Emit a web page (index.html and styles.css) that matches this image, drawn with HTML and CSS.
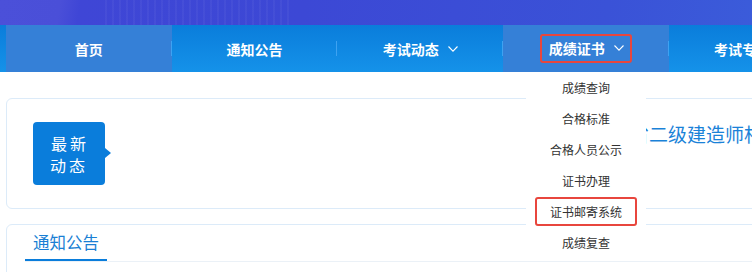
FILE: index.html
```html
<!DOCTYPE html>
<html lang="zh-CN">
<head>
  <meta charset="UTF-8">
  <meta name="viewport" content="width=device-width, initial-scale=1.0">
  <title>成绩证书</title>
  <link rel="stylesheet" href="styles.css">
</head>
<body>
  <div class="banner"></div>

  <nav class="nav">
    <ul class="nav-list">
      <li class="nav-item active">首页</li>
      <li class="nav-item">通知公告</li>
      <li class="nav-item">考试动态
        <svg class="chevron" width="10" height="6" viewBox="0 0 10 6"><polyline points="0.5,0.5 5,5.2 9.5,0.5" /></svg>
      </li>
      <li class="nav-item active open">
        <span class="mark">成绩证书
          <svg class="chevron" width="10" height="6" viewBox="0 0 10 6"><polyline points="0.5,0.5 5,5.2 9.5,0.5" /></svg>
        </span>
        <ul class="dropdown">
          <li>成绩查询</li>
          <li>合格标准</li>
          <li>合格人员公示</li>
          <li>证书办理</li>
          <li><span class="mark-sub">证书邮寄系统</span></li>
          <li>成绩复查</li>
        </ul>
      </li>
      <li class="nav-item">考试专业
        <svg class="chevron" width="10" height="6" viewBox="0 0 10 6"><polyline points="0.5,0.5 5,5.2 9.5,0.5" /></svg>
      </li>
    </ul>
  </nav>

  <div class="main">
    <div class="card news">
      <div class="badge">最新<br>动态</div>
      <div class="news-title">关于公布全省二级建造师相关证书邮寄工作的通知</div>
    </div>

    <div class="card notice">
      <div class="tabs">
        <span class="tab current">通知公告</span>
      </div>
    </div>
  </div>
</body>
</html>
```

FILE: styles.css
```css
html, body {
  margin: 0;
  padding: 0;
  overflow: hidden;
  background-color: #fff;
  font-family: "Noto Sans CJK SC", "Liberation Sans", sans-serif;
}

ul {
  list-style: none;
  margin: 0;
  padding: 0;
}

.banner {
  height: 25px;
  background:
    repeating-linear-gradient(90deg, rgba(255, 255, 255, 0) 0, rgba(255, 255, 255, 0) 5px, rgba(255, 255, 255, 0.04) 5px, rgba(255, 255, 255, 0.04) 7px) 100px 0 / 190px 25px no-repeat,
    linear-gradient(100deg, #4b50d9 0, #4a4fd8 60px, #3f46d6 80px, #3c48d5 300px, #3a52d7 600px, #3b5cda 752px);
}

.nav {
  height: 47px;
  background: linear-gradient(180deg, #0a7ddb 0%, #1592e9 100%);
}

.nav-list {
  display: flex;
  margin-left: 6px;
  height: 100%;
}

.nav-item {
  position: relative;
  flex: 0 0 165.67px;
  display: flex;
  align-items: center;
  justify-content: center;
  gap: 9px;
  color: #fff;
  font-size: 14px;
  font-weight: 700;
  white-space: nowrap;
}

.nav-item::after {
  content: "";
  position: absolute;
  right: 0;
  top: 16px;
  width: 1px;
  height: 15px;
  background-color: #3ea2f1;
}

.nav-item.active {
  background-color: #3580d7;
}

.chevron {
  fill: none;
  stroke: #fff;
  stroke-width: 1.1;
}

.mark {
  display: flex;
  align-items: center;
  gap: 9px;
  height: 25px;
  margin-top: -1px;
  padding: 0 6px 0 7px;
  border: 2px solid #e8463d;
  border-radius: 3px;
}

.dropdown {
  position: absolute;
  top: 47px;
  left: 23px;
  width: 120px;
  background-color: #fff;
  z-index: 10;
}

.dropdown li {
  height: 31px;
  display: flex;
  align-items: center;
  justify-content: center;
  font-size: 12px;
  font-weight: 400;
  color: #333;
}

.mark-sub {
  display: block;
  line-height: 25px;
  padding: 0 13px;
  border: 2px solid #e8463d;
  border-radius: 3px;
}

.main {
  margin-left: 6px;
  padding-top: 26px;
  width: 1200px;
}

.card {
  border: 1px solid #dcebf9;
  border-radius: 6px;
  background-color: #fff;
}

.news {
  display: flex;
  align-items: flex-start;
  height: 63px;
  padding: 23px 26px;
}

.badge {
  position: relative;
  flex: 0 0 72px;
  height: 63px;
  display: flex;
  align-items: center;
  justify-content: center;
  text-align: center;
  background-color: #0a7ddb;
  border-radius: 4px;
  color: #fff;
  font-size: 16px;
  line-height: 22px;
  letter-spacing: 3px;
  text-indent: 2px;
}

.badge::after {
  content: "";
  position: absolute;
  right: -6px;
  top: 26px;
  border-top: 5px solid transparent;
  border-bottom: 5px solid transparent;
  border-left: 6px solid #0a7ddb;
}

.news-title {
  margin-left: 430px;
  font-size: 19px;
  line-height: 24px;
  color: #1a82d8;
  white-space: nowrap;
}

.notice {
  margin-top: 15px;
  height: 60px;
  padding: 0 18px;
}

.tabs {
  display: flex;
  height: 36px;
  border-bottom: 1px solid #ebf1f7;
}

.tab {
  padding: 0 8px;
  font-size: 16.5px;
  line-height: 34px;
  color: #1a7fd4;
}

.tab.current {
  border-bottom: 2px solid #0a7ddb;
}
```
